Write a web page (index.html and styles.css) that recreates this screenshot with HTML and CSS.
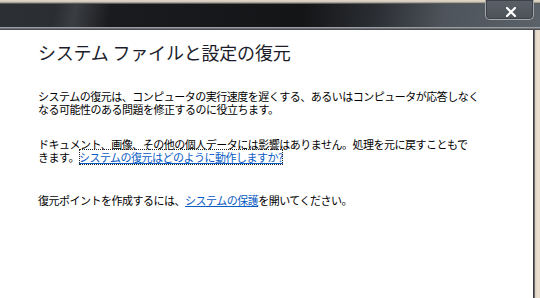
FILE: index.html
```html
<!DOCTYPE html>
<html lang="ja">
<head>
<meta charset="utf-8">
<link rel="stylesheet" href="styles.css">
</head>
<body>
<div class="window">
  <div class="frame-top"></div>
  <div class="titlebar">
    <div class="close-btn">
      <svg width="10" height="10" viewBox="0 0 10 10"><path d="M1 1 L9 9 M9 1 L1 9" stroke="#fff" stroke-width="2.2" stroke-linecap="square"/></svg>
    </div>
  </div>
  <div class="title-edge"></div>
  <div class="body-row">
    <div class="content">
      <h1 class="heading">システム ファイルと設定の復元</h1>
      <p class="para p1">システムの復元は、コンピュータの実行速度を遅くする、あるいはコンピュータが応答しなく<br>なる可能性のある問題を修正するのに役立ちます。</p>
      <p class="para p2">ドキュメント、画像、その他の個人データには影響はありません。処理を元に戻すこともで<br>きます。<a class="link focused" href="#">システムの復元はどのように動作しますか?</a></p>
      <p class="para p3">復元ポイントを作成するには、<a class="link" href="#">システムの保護</a>を開いてください。</p>
    </div>
    <div class="right-frame"></div>
  </div>
</div>
</body>
</html>
```

FILE: styles.css
```css
html, body {
  margin: 0;
  padding: 0;
  width: 540px;
  height: 298px;
  overflow: hidden;
  background: #fff;
}
.window {
  display: flex;
  flex-direction: column;
  width: 540px;
  height: 298px;
}
.frame-top {
  height: 4px;
  background: linear-gradient(to bottom, #e2d8c8 0, #cfc6b8 2px, #7e7c7a 3px, #3a3c40 4px);
}
.titlebar {
  position: relative;
  height: 23px;
  background: linear-gradient(100deg, #2c2f34 0, #2a2d31 55px, #3a3d42 75px, #1a1b1e 110px, #141517 300px, #2a2d32 370px, #4e545b 440px, #5c626a 540px);
}
.close-btn {
  position: absolute;
  left: 485px;
  top: -4px;
  width: 49px;
  height: 20px;
  border: 1px solid #a3a6aa;
  border-top: none;
  border-radius: 0 0 5px 5px;
  box-shadow: inset 0 0 0 1px #3e4248;
  background: linear-gradient(to bottom, #5a6068, #4c5258);
  display: flex;
  align-items: center;
  justify-content: center;
  padding-top: 4px;
  box-sizing: border-box;
}
.close-btn svg {
  display: block;
  margin-left: 2px;
}
.title-edge {
  height: 3px;
  background: linear-gradient(to bottom, #9a9ea2 0, #9a9ea2 1px, #6e7276 1px, #6e7276 2px, #4a4e52 2px);
}
.body-row {
  flex: 1;
  display: flex;
}
.content {
  flex: 1;
  background: #fff;
  padding: 12px 0 0 38px;
  font-family: "Noto Sans CJK JP", "Noto Sans", sans-serif;
  color: #000;
}
.right-frame {
  width: 7px;
  background: linear-gradient(to right, #3a3c40 0, #3a3c40 1px, #6a6c70 1px, #6a6c70 2px, #d8ccbc 2px, #efe4d4 5px, #e0d6c8 7px);
}
.heading {
  margin: 0;
  font-size: 18px;
  line-height: 20px;
  font-weight: normal;
  color: #1b1d2a;
  letter-spacing: -0.2px;
}
.para {
  margin: 0;
  font-size: 11px;
  line-height: 13px;
  letter-spacing: -0.5px;
}
.p1 { margin-top: 28px; }
.p2 { margin-top: 22px; }
.p3 { margin-top: 30px; }
.link {
  color: #0a5bc4;
  text-decoration: underline;
}
.focused {
  outline: 1px dotted #222;
  outline-offset: -1px;
}
```
